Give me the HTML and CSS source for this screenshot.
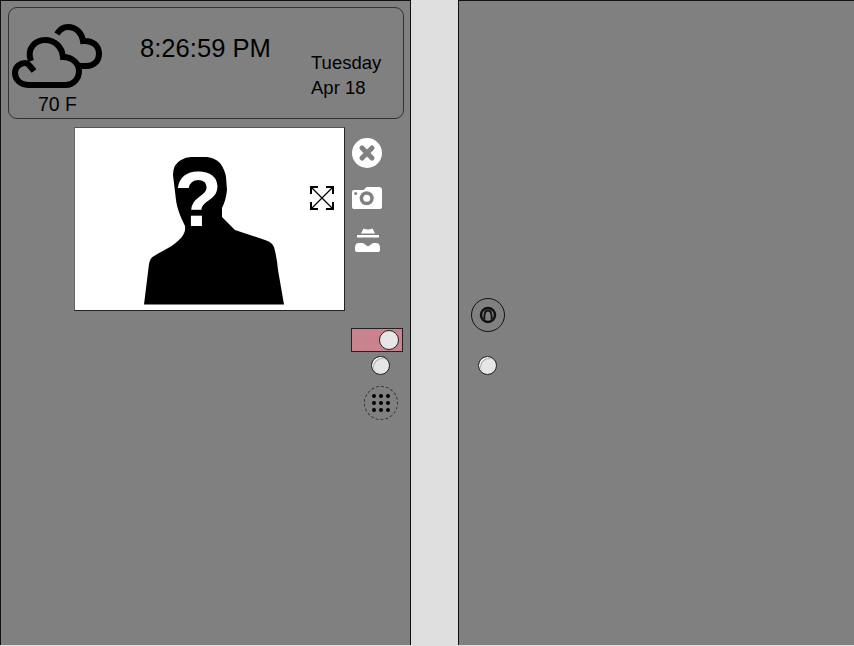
FILE: index.html
```html
<!DOCTYPE html>
<html lang="en">
<head>
  <meta charset="UTF-8" />
  <title>Door Panel</title>
  <link rel="stylesheet" href="styles.css">
</head>
<body>
  <div class="screen">

    <section class="panel panel-left">
      <header class="status">
        <div class="weather">
          <svg class="cloud" viewBox="0 0 94 72" aria-hidden="true">
            <path d="M45 10 C48 5 52 3 56 3 C64 3 70 9 71 17 C81 16 87 22 87 30 C87 37 82 42 74 42 L67 42" />
            <path d="M19 37 C14 24 24 16 33 16 C43 16 50 23 51 33 C61 33 67 40 67 47 C67 55 61 61 54 61 L16 61 C8 61 3 55 3 49 C3 42 9 39 13 39 C16 39 18 42 22 47" />
          </svg>
          <div class="temp">70 F</div>
        </div>
        <div class="clock">8:26:59 PM</div>
        <div class="date">
          <div>Tuesday</div>
          <div>Apr 18</div>
        </div>
      </header>

      <div class="call-row">
        <div class="video">
          <svg class="portrait" viewBox="75 128 269 182" aria-label="Unknown caller">
            <path d="M144 304.500 L149 264 Q150 258 154 256 C164 250 174 246 181 238 Q186 232 185 226 C180 216 177 208 176 200 L173 175 Q173 164 181 160 Q186 157 191 157 L207 157 Q215 158 220 163 Q225 170 226 177 L227 190 Q226 200 222 208 L222 217 L235 230 L265 240 Q272 242 274 247 Q277 258 278 270 L284 304.500 Z" />
            <text class="unknown" x="198" y="226" text-anchor="middle">?</text>
          </svg>
          <svg class="expand" viewBox="0 0 24 24" aria-hidden="true">
            <path class="expand-line" d="M2 2 L22 22 M22 2 L2 22" />
            <path class="expand-corner" d="M1 8 V1 H8 M16 1 H23 V8 M23 16 V23 H16 M8 23 H1 V16" />
          </svg>
        </div>

        <div class="actions">
          <svg class="action" viewBox="0 0 30 30" aria-hidden="true">
            <circle class="white" cx="15" cy="15" r="15" />
            <path class="close-mark" d="M10 10 L20 20 M20 10 L10 20" />
          </svg>
          <svg class="action" viewBox="0 0 30 30" aria-hidden="true">
            <path class="white" d="M2 8 H11 Q12 8 13 6.500 Q14 5 15 5 H27 Q30 5 30 8 V25 Q30 27 28 27 H2 Q0 27 0 25 V10 Q0 8 2 8 Z" />
            <circle class="grey" cx="14.700" cy="16.300" r="7" />
            <circle class="white" cx="14.700" cy="16.300" r="3.500" />
            <circle class="grey" cx="3.700" cy="11.500" r="1.500" />
          </svg>
          <svg class="action spy" viewBox="0 0 26 26" aria-hidden="true">
            <path class="white" d="M6 6.500 L8.500 1.500 Q13 3.500 17.500 1.500 L20 6.500 Z" />
            <rect class="white" x="2" y="8" width="22" height="2.500" />
            <path class="white" d="M0 21 Q0 16 4 16 H8 L13 19.500 L18 16 H21 Q25 16 25 21 V23 Q25 25 22 25 H3 Q0 25 0 23 Z" />
          </svg>
        </div>
      </div>

      <div class="controls">
        <div class="toggle"><span class="knob"></span></div>
        <span class="knob knob-lone"></span>
        <button class="dial">
          <svg viewBox="0 0 18 18" aria-hidden="true">
            <circle cx="2" cy="2" r="2" /><circle cx="9" cy="2" r="2" /><circle cx="16" cy="2" r="2" />
            <circle cx="2" cy="9" r="2" /><circle cx="9" cy="9" r="2" /><circle cx="16" cy="9" r="2" />
            <circle cx="2" cy="16" r="2" /><circle cx="9" cy="16" r="2" /><circle cx="16" cy="16" r="2" />
          </svg>
        </button>
      </div>
    </section>

    <section class="panel panel-right">
      <div class="bell">
        <svg viewBox="0 0 20 20" aria-hidden="true">
          <circle class="bell-ring" cx="10" cy="10" r="7" />
          <path class="bell-body" d="M6.500 14.500 C6 9 7 5.500 10 5.500 C13 5.500 14 9 13.500 14.500" />
        </svg>
      </div>
      <span class="knob knob-right"></span>
    </section>

  </div>
</body>
</html>
```

FILE: styles.css
```css
* {
  box-sizing: border-box;
}

body {
  margin: 0;
  font-family: "Liberation Sans", Arial, sans-serif;
  background-color: #dedede;
  color: #000;
  overflow: hidden;
}

.screen {
  display: flex;
  height: 645px;
}

.panel {
  background-color: #808080;
  border-top: 1px solid #111;
  border-left: 1px solid #111;
}

.panel-left {
  width: 411px;
  padding: 6px 6px 0 7px;
  border-right: 1px solid #111;
}

.panel-right {
  width: 396px;
  margin-left: 47px;
  padding: 297px 0 0 12px;
}

/* top status box */
.status {
  display: flex;
  height: 112px;
  border: 1px solid #333;
  border-radius: 9px;
}

.weather {
  width: 131px;
  padding: 16px 0 0 3px;
}

.cloud {
  display: block;
  width: 94px;
  height: 72px;
  overflow: visible;
}

.cloud path {
  fill: none;
  stroke: #000;
  stroke-width: 6;
}

.temp {
  margin-top: -3px;
  padding-left: 26px;
  font-size: 19.500px;
  line-height: 22px;
}

.clock {
  width: 171px;
  padding-top: 26px;
  font-size: 25.600px;
  line-height: 29px;
}

.date {
  padding-top: 42px;
  font-size: 18.500px;
  line-height: 25px;
}

/* video and its actions */
.call-row {
  display: flex;
  margin: 8px 0 0 66px;
}

.video {
  position: relative;
  width: 271px;
  height: 184px;
  background: #fff;
  border: 1px solid #222;
  border-top-color: #555;
  border-left-color: #666;
}

.portrait {
  display: block;
  width: 269px;
  height: 182px;
}

.unknown {
  fill: #fff;
  font-size: 78px;
  font-weight: 700;
}

.expand {
  position: absolute;
  left: 235px;
  top: 58px;
  width: 24px;
  height: 24px;
}

.expand-line {
  fill: none;
  stroke: #000;
  stroke-width: 1.200;
}

.expand-corner {
  fill: none;
  stroke: #000;
  stroke-width: 2;
}

.actions {
  display: flex;
  flex-direction: column;
  gap: 14px;
  padding: 11px 0 0 7px;
}

.action {
  display: block;
  width: 30px;
  height: 30px;
}

.spy {
  margin-top: 1px;
  width: 26px;
  height: 26px;
  margin-left: 3px;
}

.white {
  fill: #fff;
}

.grey {
  fill: #808080;
}

.close-mark {
  fill: none;
  stroke: #808080;
  stroke-width: 5;
  stroke-linecap: round;
}

/* lower controls */
.controls {
  display: flex;
  flex-direction: column;
  align-items: center;
  width: 52px;
  margin: 17px 0 0 343px;
}

.toggle {
  display: flex;
  align-items: center;
  justify-content: flex-end;
  width: 52px;
  height: 24px;
  padding-right: 3px;
  background-color: #c9838f;
  border: 1px solid #222;
}

.knob {
  display: block;
  width: 19px;
  height: 19px;
  border-radius: 50%;
  background: #e6e6e6;
  border: 1px solid #222;
  box-shadow: inset 1px 1px 0 #fff, inset 2px 2px 0 #b5b5b5;
}

.toggle .knob {
  width: 20px;
  height: 20px;
  box-shadow: none;
}

.knob-lone {
  margin: 4px 0 0 6px;
}

.dial {
  width: 34px;
  height: 34px;
  margin: 11px 0 0 8px;
  padding: 7px;
  background: none;
  border: 1px dashed #333;
  border-radius: 50%;
}

.dial svg {
  display: block;
  width: 18px;
  height: 18px;
  fill: #000;
}

/* right side door controls */
.bell {
  width: 34px;
  height: 34px;
  padding: 6px;
  border: 1px solid #111;
  border-radius: 50%;
}

.bell svg {
  display: block;
  width: 20px;
  height: 20px;
  fill: none;
  stroke: #111;
}

.bell-ring {
  stroke-width: 2.500;
}

.bell-body {
  stroke-width: 1.800;
}

.knob-right {
  margin: 24px 0 0 7px;
}
```
